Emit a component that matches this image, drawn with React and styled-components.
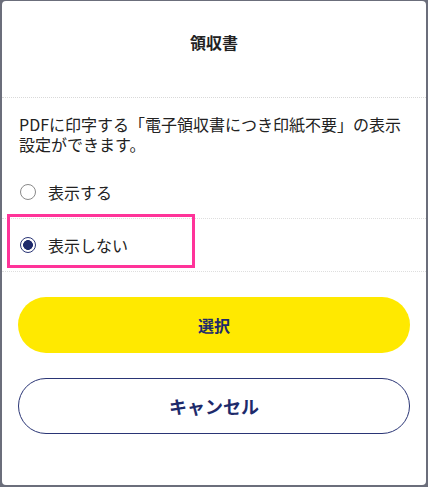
import React, { useState } from "react";
import styled, { createGlobalStyle } from "styled-components";

const GlobalStyle = createGlobalStyle`
  html, body {
    margin: 0;
    padding: 0;
    background: #6b6e7b;
  }
  body {
    font-family: "Noto Sans CJK JP", "Noto Sans", sans-serif;
    color: #222;
  }
`;

const options = [
  { value: "show", label: "表示する" },
  { value: "hide", label: "表示しない" },
];

const App = () => {
  const [selected, setSelected] = useState("hide");

  return (
    <>
      <GlobalStyle />
      <Modal>
        <Header>
          <Title>領収書</Title>
        </Header>
        <Description>
          PDFに印字する「電子領収書につき印紙不要」の表示
          <br />
          設定ができます。
        </Description>
        <OptionList>
          {options.map((opt) => (
            <OptionRow key={opt.value} onClick={() => setSelected(opt.value)}>
              <Radio checked={selected === opt.value} />
              <OptionLabel>{opt.label}</OptionLabel>
            </OptionRow>
          ))}
          <Highlight />
        </OptionList>
        <Actions>
          <PrimaryButton type="button">選択</PrimaryButton>
          <OutlineButton type="button">キャンセル</OutlineButton>
        </Actions>
      </Modal>
    </>
  );
};

export default App;

// Styled Components
const Modal = styled.div`
  position: relative;
  box-sizing: border-box;
  width: 424px;
  height: 484px;
  margin: 1px 2px 2px 2px;
  background: #fff;
  border-radius: 4px;
  overflow: hidden;
`;

const Header = styled.div`
  height: 97px;
  display: flex;
  align-items: center;
  justify-content: center;
  border-bottom: 1px dotted #d9d9d9;
  padding-bottom: 14px;
  box-sizing: border-box;
`;

const Title = styled.h2`
  margin: 0;
  font-size: 16px;
  font-weight: 700;
  color: #222;
`;

const Description = styled.p`
  margin: 0;
  padding: 16px 17px 11px;
  font-size: 16px;
  line-height: 20px;
  color: #222;
`;

const OptionList = styled.div`
  position: relative;
`;

const OptionRow = styled.label`
  display: flex;
  align-items: center;
  gap: 12px;
  height: 53px;
  padding: 0 18px;
  box-sizing: border-box;
  border-bottom: 1px dotted #dedede;
  cursor: pointer;

  &:first-child {
    height: 54px;
  }
`;

const Radio = styled.span`
  width: 16px;
  height: 16px;
  box-sizing: border-box;
  border-radius: 50%;
  border: 1px solid ${(p) => (p.checked ? "#2a3575" : "#8a8a8a")};
  background: ${(p) =>
    p.checked
      ? "radial-gradient(circle, #1f2a6b 0 4.6px, #fff 5.2px)"
      : "#fff"};
  flex-shrink: 0;
`;

const OptionLabel = styled.span`
  font-size: 16px;
  color: #222;
`;

const Highlight = styled.div`
  position: absolute;
  left: 5px;
  top: 49px;
  width: 188px;
  height: 54px;
  box-sizing: border-box;
  border: 3px solid #ff3399;
  pointer-events: none;
`;

const Actions = styled.div`
  display: flex;
  flex-direction: column;
  gap: 25px;
  padding: 25px 16px 0;
`;

const buttonBase = `
  width: 100%;
  height: 56px;
  border-radius: 28px;
  font-family: "Noto Sans CJK JP", "Noto Sans", sans-serif;
  font-weight: 700;
  color: #1d2a6b;
  cursor: pointer;
`;

const PrimaryButton = styled.button`
  ${buttonBase}
  border: none;
  background: #ffe900;
  font-size: 16px;
`;

const OutlineButton = styled.button`
  ${buttonBase}
  border: 1px solid #2a3575;
  background: #fff;
  font-size: 18px;
`;
